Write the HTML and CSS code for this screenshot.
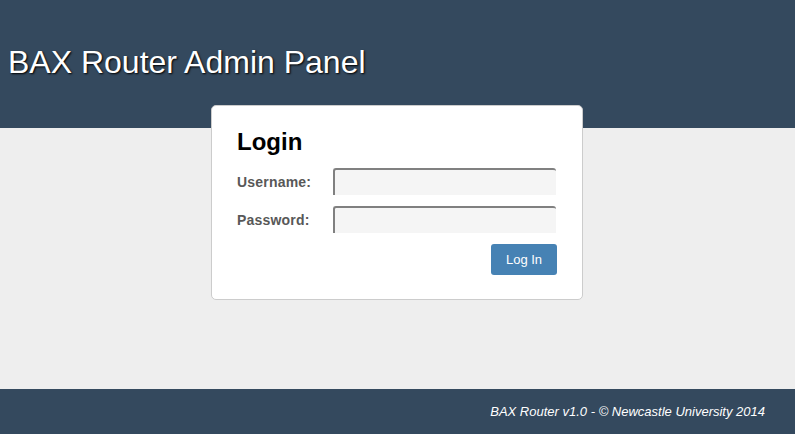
FILE: index.html
```html
<!DOCTYPE html>
<html>
<head>
<meta charset="utf-8">
<link rel="stylesheet" href="styles.css">
</head>
<body>
<div class="page">
  <header class="top">
    <h1 class="title">BAX Router Admin Panel</h1>
  </header>
  <main class="main">
    <form class="card">
      <h2 class="card-title">Login</h2>
      <div class="row">
        <label class="label">Username:</label>
        <input class="field" type="text">
      </div>
      <div class="row">
        <label class="label">Password:</label>
        <input class="field" type="password">
      </div>
      <div class="actions">
        <button class="btn" type="button">Log In</button>
      </div>
    </form>
  </main>
  <footer class="foot">BAX Router v1.0 - © Newcastle University 2014</footer>
</div>
</body>
</html>
```

FILE: styles.css
```css
html, body {
  margin: 0;
  padding: 0;
  height: 100%;
}
body {
  font-family: "Liberation Sans", Arial, sans-serif;
  background: #eeeeee;
}
.page {
  display: flex;
  flex-direction: column;
  min-height: 100vh;
}
.top {
  background: #34495e;
  height: 128px;
  box-sizing: border-box;
  padding: 44px 8px 0;
}
.title {
  margin: 0;
  font-weight: normal;
  font-size: 32px;
  line-height: 36px;
  color: #ffffff;
  text-shadow: 1px 1px 2px #000000;
}
.main {
  flex: 1;
  display: flex;
  justify-content: center;
  align-items: flex-start;
}
.card {
  margin: -23px 0 0 -1px;
  width: 372px;
  box-sizing: border-box;
  background: #ffffff;
  border: 1px solid #cccccc;
  border-radius: 5px;
  padding: 24px 25px 24px 25px;
}
.card-title {
  margin: 0 0 14px;
  font-size: 24px;
  line-height: 24px;
  font-weight: bold;
  color: #000;
}
.row {
  display: flex;
  align-items: center;
  height: 27px;
  margin-bottom: 11px;
}
.label {
  width: 96px;
  font-size: 14px;
  letter-spacing: 0.2px;
  font-weight: bold;
  color: #585858;
}
.field {
  width: 223px;
  height: 27px;
  box-sizing: border-box;
  background: #f5f5f5;
  border-style: solid;
  border-width: 2px 0 0 2px;
  border-color: #808080;
  border-radius: 3px 3px 0 0;
  padding: 0 4px;
  font: 14px "Liberation Sans", Arial, sans-serif;
  outline: none;
}
.actions {
  display: flex;
  justify-content: flex-end;
  margin-top: 1px;
}
.btn {
  width: 66px;
  height: 31px;
  background: #4682b4;
  color: #ffffff;
  border: 0;
  border-radius: 3px;
  font: 13px "Liberation Sans", Arial, sans-serif;
  padding: 0;
}
.foot {
  background: #34495e;
  height: 45px;
  box-sizing: border-box;
  padding: 15px 30px 0 0;
  text-align: right;
  color: #ffffff;
  font-style: italic;
  font-size: 13px;
}
```
